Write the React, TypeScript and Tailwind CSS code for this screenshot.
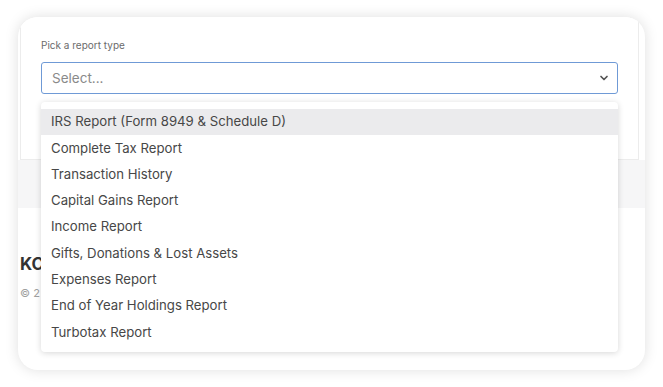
import React from "react";

const reportTypes = [
  "IRS Report (Form 8949 & Schedule D)",
  "Complete Tax Report",
  "Transaction History",
  "Capital Gains Report",
  "Income Report",
  "Gifts, Donations & Lost Assets",
  "Expenses Report",
  "End of Year Holdings Report",
  "Turbotax Report",
];

export default function App() {
  return (
    <div className="w-[663px] h-[387px] bg-white overflow-hidden pt-[17px] pl-[18px] font-['Inter','Liberation_Sans',sans-serif]">
      <div className="relative w-[627px] h-[353px] bg-white rounded-[20px] overflow-hidden shadow-[0_0_14px_rgba(0,0,0,0.13)]">
        {/* screenshot content */}
        <div className="ml-[2px] w-[619px] h-[143px] border-x border-b border-[#ececec] bg-white px-[20px] pt-[21px]">
          <div className="text-[10px] leading-[14px] text-[#6b6b6b]">Pick a report type</div>
          <div className="mt-[10px] h-[32px] w-[577px] rounded-[3px] border-[1.5px] border-[#6f9ad6] flex items-center justify-between pl-[10px] pr-[7px]">
            <span className="text-[13.5px] text-[#8a8a8a]">Select...</span>
            <svg width="12" height="12" viewBox="0 0 24 24" fill="none" stroke="#555" strokeWidth={3.4} strokeLinecap="round" strokeLinejoin="round">
              <path d="M6 9l6 6 6-6" />
            </svg>
          </div>
        </div>
        <div className="h-[48px] bg-[#f6f6f7]" />
        <div className="pl-[2px] pt-[46px] w-[22px]">
          <div className="text-[17px] font-bold leading-[20px] text-[#333]">KC</div>
          <div className="mt-[11px] text-[11px] text-[#a0a0a0] whitespace-nowrap">© 2</div>
        </div>

        {/* open dropdown menu */}
        <div className="absolute left-[23px] top-[85px] w-[577px] h-[250px] bg-white rounded-[4px] shadow-[0_1px_6px_rgba(0,0,0,0.16)] pt-[7px] pb-[5px]">
          {reportTypes.map((r, i) => (
            <div
              key={r}
              className={
                "h-[26.3px] flex items-center pl-[10px] text-[13.2px] text-[#474747] " +
                (i === 0 ? "bg-[#ebebed]" : "")
              }
            >
              {r}
            </div>
          ))}
        </div>
      </div>
    </div>
  );
}
